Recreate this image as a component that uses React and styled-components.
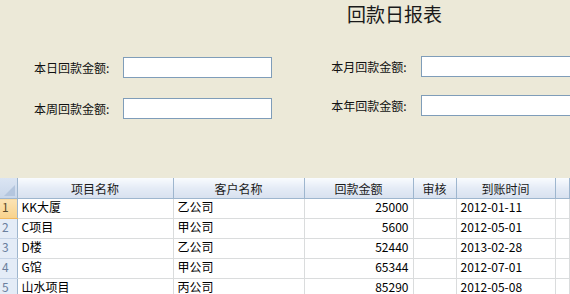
import React from 'react';
import styled, { createGlobalStyle } from 'styled-components';

const GlobalStyle = createGlobalStyle`
  html, body {
    margin: 0;
    padding: 0;
    background: #ece9d8;
    overflow: hidden;
  }
  body {
    font-family: "Noto Sans CJK SC", "Noto Sans", sans-serif;
    font-size: 12px;
    color: #000;
  }
`;

const rows = [
	{ id: 1, project: 'KK大厦', customer: '乙公司', amount: '25000', date: '2012-01-11' },
	{ id: 2, project: 'C项目', customer: '甲公司', amount: '5600', date: '2012-05-01' },
	{ id: 3, project: 'D楼', customer: '乙公司', amount: '52440', date: '2013-02-28' },
	{ id: 4, project: 'G馆', customer: '甲公司', amount: '65344', date: '2012-07-01' },
	{ id: 5, project: '山水项目', customer: '丙公司', amount: '85290', date: '2012-05-08' },
]

const columns = [
	{ key: 'project', label: '项目名称', width: 156 },
	{ key: 'customer', label: '客户名称', width: 131 },
	{ key: 'amount', label: '回款金额', width: 109, align: 'right' },
	{ key: 'check', label: '审核', width: 43 },
	{ key: 'date', label: '到账时间', width: 99 },
]

const App = () => {
	return (
		<Page>
			<GlobalStyle/>
			<Title>回款日报表</Title>

			<Form>
				<Column $gap={20} $pad={34}>
					<Field>
						<Label>本日回款金额:</Label>
						<Input/>
					</Field>
					<Field>
						<Label>本周回款金额:</Label>
						<Input/>
					</Field>
				</Column>
				<Column $gap={18} $pad={0} $shift={-1}>
					<Field>
						<Label>本月回款金额:</Label>
						<Input $wide/>
					</Field>
					<Field>
						<Label>本年回款金额:</Label>
						<Input $wide/>
					</Field>
				</Column>
			</Form>

			<Grid>
				<colgroup>
					<col style={{ width: 17 }}/>
					{columns.map(c => <col key={c.key} style={{ width: c.width }}/>)}
					<col/>
				</colgroup>
				<thead>
					<tr>
						<Corner><CornerMark/></Corner>
						{columns.map(c => <HeadCell key={c.key}>{c.label}</HeadCell>)}
						<HeadCell/>
					</tr>
				</thead>
				<tbody>
					{rows.map(r => (
						<tr key={r.id}>
							<RowHead $active={r.id === 1}>{r.id}</RowHead>
							{columns.map(c => (
								<Cell key={c.key} $align={c.align}>{r[c.key] || ''}</Cell>
							))}
							<Cell/>
						</tr>
					))}
				</tbody>
			</Grid>
		</Page>
	);
};

const Page = styled.div`
  width: 570px;
  height: 294px;
  overflow: hidden;
  padding-top: 2px;
  box-sizing: border-box;
`;

const Title = styled.h1`
  margin: 0;
  padding-left: 347px;
  font-size: 19px;
  line-height: 24px;
  font-weight: normal;
  color: #1a1a1a;
`;

const Form = styled.div`
  display: flex;
  margin-top: 31px;
  gap: 59px;
`;

const Column = styled.div`
  display: flex;
  flex-direction: column;
  gap: ${p => p.$gap}px;
  padding-left: ${p => p.$pad}px;
  margin-top: ${p => p.$shift || 0}px;
`;

const Field = styled.div`
  display: flex;
  align-items: center;
  gap: 14px;
`;

const Label = styled.span`
  font-size: 12px;
  line-height: 16px;
  white-space: nowrap;
  color: #111;
`;

const Input = styled.input`
  box-sizing: border-box;
  width: ${p => p.$wide ? 160 : 149}px;
  height: 21px;
  margin: 0;
  border: 1px solid #7f9db9;
  background: #fff;
  outline: none;
`;

const Grid = styled.table`
  margin-top: 59px;
  width: 570px;
  table-layout: fixed;
  border-collapse: collapse;
  background: #fff;
`;

const HeadCell = styled.th`
  height: 20px;
  padding: 0;
  font-weight: normal;
  font-size: 12px;
  text-align: center;
  color: #1b1b1b;
  background: linear-gradient(#f9fbfe, #e3eaf5 55%, #d8e1ef);
  border-right: 1px solid #9eb6ce;
  border-bottom: 1px solid #9eb6ce;
  white-space: nowrap;
  overflow: hidden;
`;

const Corner = styled.th`
  position: relative;
  padding: 0;
  background: linear-gradient(#dbe5f3, #c9d7ea);
  border-right: 1px solid #9eb6ce;
  border-bottom: 1px solid #9eb6ce;
`;

const CornerMark = styled.span`
  position: absolute;
  right: 2px;
  bottom: 2px;
  width: 0;
  height: 0;
  border-left: 11px solid transparent;
  border-bottom: 11px solid #b4c6de;
`;

const RowHead = styled.td`
  height: 19px;
  padding: 0 0 0 2px;
  font-size: 12px;
  line-height: 16px;
  vertical-align: top;
  color: ${p => p.$active ? '#5b4a2a' : '#6b7f9e'};
  background: ${p => p.$active ? 'linear-gradient(#fbe3b4, #f8d28c)' : '#e4ecf7'};
  border-right: 1px solid #9eb6ce;
  border-bottom: 1px solid ${p => p.$active ? '#f0b860' : '#c5d3e6'};
`;

const Cell = styled.td`
  height: 19px;
  padding: 0 4px;
  font-size: 12px;
  line-height: 16px;
  vertical-align: top;
  text-align: ${p => p.$align || 'left'};
  border-right: 1px solid #dadcdd;
  border-bottom: 1px solid #dadcdd;
  white-space: nowrap;
  overflow: hidden;
`;

export default App;
